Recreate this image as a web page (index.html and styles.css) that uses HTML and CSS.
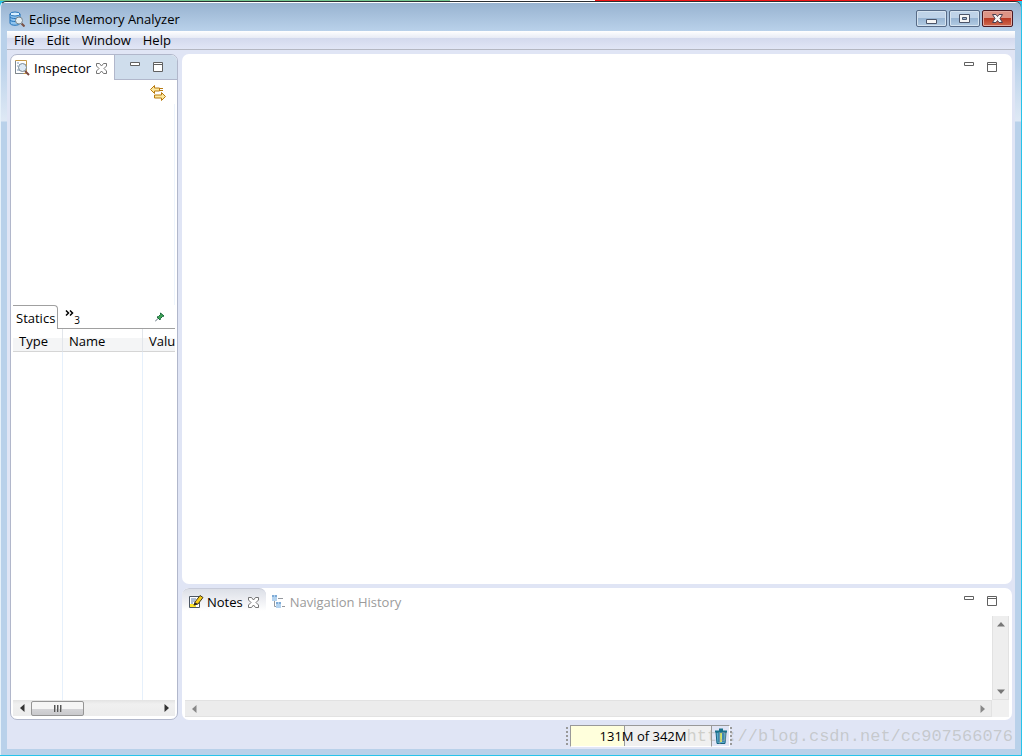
FILE: index.html
```html
<!DOCTYPE html>
<html lang="en">
<head>
<meta charset="utf-8">
<title>Eclipse Memory Analyzer</title>
<link rel="stylesheet" href="styles.css">
</head>
<body>
<svg class="defs" aria-hidden="true">
  <symbol id="minimize" viewBox="0 0 10 10"><path d="M.5.5h9v3h-9z" fill="#fff" stroke="#606060"/></symbol>
  <symbol id="maximize" viewBox="0 0 10 10"><path d="M.5.5h9v9h-9zM0 2.5h10" fill="#fff" stroke="#606060"/></symbol>
  <symbol id="close" viewBox="0 0 11 11"><path d="M.5.5h3l2 2.500 2-2.500h3v2.500l-2.500 2.500 2.500 2.500v2.500h-3l-2-2.500-2 2.500h-3v-2.500l2.500-2.500-2.500-2.500z" fill="#fff" stroke="#666" stroke-width=".9"/></symbol>
</svg>
<div class="window">
  <header class="titlebar">
    <svg class="icon" viewBox="0 0 16 16">
      <path d="M1 3v9c0 3 10 3 10 0V3z" fill="#8fc4ef" stroke="#2372b8"/>
      <ellipse cx="6" cy="3" rx="5" ry="2" fill="#d8efff" stroke="#2372b8"/>
      <path d="M1 6c1 2 9 2 10 0M1 9c1 2 9 2 10 0" fill="none" stroke="#2372b8"/>
      <path d="M12.500 12.500l3 3" stroke="#7b5145" stroke-width="2"/>
      <circle cx="10" cy="9.500" r="3.500" fill="#e4edf2" stroke="#78868d"/>
    </svg>
    <h1>Eclipse Memory Analyzer</h1>
    <div class="captions">
      <button class="caption" aria-label="Minimize window"><svg viewBox="0 0 29 15"><path d="M9.500 8.500h10v4h-10z" fill="#f5f5f5" stroke="#4b5468"/></svg></button>
      <button class="caption" aria-label="Restore window"><svg viewBox="0 0 29 15"><path d="M9.500 3.500h10v8h-10z" fill="#f5f5f5" stroke="#4b5468"/><path d="M12.500 6.500h4v2h-4z" fill="#9ab5d3" stroke="#4b5468"/></svg></button>
      <button class="caption caption-close" aria-label="Close window"><svg viewBox="0 0 29 15"><path d="M9.500 3.500h3.500l1.500 2 1.500-2h3.500l-2.500 4 2.500 4h-3.500l-1.500-2-1.500 2h-3.500l2.500-4z" fill="#f5f5f5" stroke="#4b3f50"/></svg></button>
    </div>
  </header>
  <div class="client">
    <nav class="menu">
      <button>File</button><button>Edit</button><button>Window</button><button>Help</button>
    </nav>
    <main class="workbench">
      <section class="panel inspector">
        <div class="tabs">
          <div class="tab">
            <svg class="icon" viewBox="0 0 16 16">
              <path d="M1.500 .5h11v13h-11z" fill="#fff" stroke="#c59a48"/><path d="M1.500 1v12.500h8" fill="none" stroke="#7d8790"/>
              <path d="M3 3h2m-2 3h1m-1 4h2" stroke="#7897bd"/>
              <path d="M11 11l4 4" stroke="#7b4940" stroke-width="2"/>
              <circle cx="8.500" cy="7.500" r="4" fill="#dce9f5" stroke="#778894"/>
            </svg>
            <span>Inspector</span>
            <button class="tool" aria-label="Close Inspector"><svg class="x"><use href="#close"/></svg></button>
          </div>
          <div class="controls">
            <button class="tool" aria-label="Minimize"><svg class="small"><use href="#minimize"/></svg></button>
            <button class="tool" aria-label="Maximize"><svg class="small"><use href="#maximize"/></svg></button>
          </div>
        </div>
        <div class="toolbar">
          <button class="tool" aria-label="Link with snapshot"><svg class="sync" viewBox="0 0 16 16"><path d="M.5 4.500l4-4v2.500h5v3h-5v2.500zM15.500 11.500l-4-4V10h-7v3h7v2.500z" fill="#fde9a0" stroke="#b87a10"/><path d="M10 3.500h3M10 5.500h3" stroke="#b87a10"/></svg></button>
        </div>
        <div class="details"></div>
        <div class="statics">
          <div class="subtabs">
            <button class="subtab">Statics</button>
            <button class="more" aria-label="Show 3 more tabs"><svg viewBox="0 0 9 7"><path d="M1 .5l2.500 2.500L1 5.500M5 .5l2.500 2.500L5 5.500" fill="none" stroke="#000" stroke-width="1.500"/></svg><small>3</small></button>
            <button class="tool pin" aria-label="Pin tab"><svg viewBox="0 0 10 10"><path d="M0 9.500l4-4" stroke="#5d6d78"/><path d="M5.500 1l3.500 3-1.500.5-2 2-.5 1.500L2 5l1.500-.5 2-2z" fill="#3fa455" stroke="#17683b"/></svg></button>
          </div>
          <table>
            <thead><tr><th>Type</th><th>Name</th><th>Value</th></tr></thead>
            <tbody><tr><td></td><td></td><td></td></tr></tbody>
          </table>
          <div class="hscroll">
            <button class="arrow" aria-label="Scroll left"><svg viewBox="0 0 5 8"><path d="M4.500 0v8L0 4z" fill="#333"/></svg></button>
            <div class="thumb"><i></i><i></i><i></i></div>
            <button class="arrow end" aria-label="Scroll right"><svg viewBox="0 0 5 8"><path d="M.5 0v8L5 4z" fill="#333"/></svg></button>
          </div>
        </div>
      </section>
      <div class="column">
        <section class="panel editor">
          <div class="controls">
            <button class="tool" aria-label="Minimize"><svg class="small"><use href="#minimize"/></svg></button>
            <button class="tool" aria-label="Maximize"><svg class="small"><use href="#maximize"/></svg></button>
          </div>
        </section>
        <section class="panel notes">
          <div class="tabs">
            <div class="tab">
              <svg class="icon" viewBox="0 0 16 16">
                <path d="M1.500 2.500h10v11h-10z" fill="#fff" stroke="#4b5662"/><path d="M3 5h5M3 7h4M3 9h2" stroke="#5e7ca8"/>
                <path d="M2 10h6v3H2z" fill="#ffe52a"/>
                <path d="M7 8l5-6.500 3 2-5 6.500-4 1z" fill="#f8cc16" stroke="#463c1e"/><path d="M5.500 11.500l2-3 2 1.500z" fill="#222"/>
              </svg>
              <span>Notes</span>
              <button class="tool" aria-label="Close Notes"><svg class="x"><use href="#close"/></svg></button>
            </div>
            <button class="tab-idle">
              <svg class="icon" viewBox="0 0 16 16">
                <path d="M3.500 6v6.500H6M7 4.500h5M11 12.500h3" fill="none" stroke="#94989e"/>
                <path d="M1 1h5v6H1zM5 8h5v6H5z" fill="#b4d3ef"/><path d="M1 1h2v2H1zM4 1h2v2H4zM5 8h2v2H5zM8 8h2v2H8z" fill="#7fabd6"/>
              </svg>
              <span>Navigation History</span>
            </button>
            <div class="controls">
              <button class="tool" aria-label="Minimize"><svg class="small"><use href="#minimize"/></svg></button>
              <button class="tool" aria-label="Maximize"><svg class="small"><use href="#maximize"/></svg></button>
            </div>
          </div>
          <div class="textpane">
            <textarea aria-label="Notes"></textarea>
            <div class="vscroll">
              <button class="arrow" aria-label="Scroll up"><svg class="wide" viewBox="0 0 8 5"><path d="M0 4.500h8L4 0z" fill="#777"/></svg></button>
              <button class="arrow" aria-label="Scroll down"><svg class="wide" viewBox="0 0 8 5"><path d="M0 .5h8L4 5z" fill="#777"/></svg></button>
            </div>
            <div class="hscroll idle">
              <button class="arrow" aria-label="Scroll left"><svg viewBox="0 0 5 8"><path d="M4.500 0v8L0 4z" fill="#888"/></svg></button>
              <button class="arrow end" aria-label="Scroll right"><svg viewBox="0 0 5 8"><path d="M.5 0v8L5 4z" fill="#888"/></svg></button>
            </div>
            <div class="corner"></div>
          </div>
        </section>
      </div>
    </main>
    <footer class="status">
      <span class="grip"></span>
      <div class="heap"><span>131M of 342M</span></div>
      <button class="trash" aria-label="Run garbage collector"><svg viewBox="0 0 14 16"><path d="M2 4h10l-1 11.500H3z" fill="#5aaccb" stroke="#17617f"/><path d="M5 5v9M9 5v9" stroke="#24619a"/><path d="M7 5v9" stroke="#d5e36a" stroke-width="2"/><path d="M1 3.500h12M5 1.500h4" stroke="#17718b" stroke-width="2"/></svg></button>
      <span class="grip"></span>
    </footer>
  </div>
  <div class="watermark">http://blog.csdn.net/cc907566076</div>
</div>
</body>
</html>
```
FILE: styles.css
```css
* { box-sizing: border-box; }
body {
  margin: 0;
  height: 100vh;
  padding: 1px 1px 1px 0;
  background: linear-gradient(90deg, #75c78f 0 44%, #fff 44% 58.2%, #f01414 58.2%) top / 100% 1px no-repeat, #27c3ea;
  font: 13px/18px "Open Sans", "Noto Sans", sans-serif;
  color: #000;
  overflow: hidden;
}
button { font: inherit; color: inherit; border: 0; padding: 0; background: none; }
svg { display: block; flex: none; }
.defs { position: absolute; width: 0; height: 0; }
.icon { width: 16px; height: 16px; }
.window {
  position: relative;
  height: 100%;
  display: flex;
  flex-direction: column;
  padding: 0 6px 6px;
  border-top: 1px solid #2b2f33;
  border-left: 1px solid #e6f1fa;
  border-radius: 6px 6px 0 0;
  background: linear-gradient(#fff 0 1px, #98b3d0 1px, #b9d1ea 29px, #b9d1ea 60px, #dfe9f5 119px, #b9d1ea 120px);
}
.titlebar { flex: none; height: 29px; display: flex; align-items: center; gap: 4px; padding: 4px 2px 0; }
.titlebar h1 { flex: 1; margin: 0; font-size: 13px; font-weight: 400; }
.captions { display: flex; gap: 2px; }
.caption {
  width: 31px;
  height: 17px;
  border: 1px solid #576b87;
  border-radius: 2px;
  box-shadow: inset 0 0 0 1px #d5e3f0;
  background: linear-gradient(#bfd3e8 50%, #98b5d3 50%, #b3cce3);
}
.caption svg { width: 29px; height: 15px; }
.caption-close { border-color: #4b1922; box-shadow: inset 0 0 0 1px #e3a99f; background: linear-gradient(#dd9486 50%, #b93a24 50%, #cf6a4e); }
.client { flex: 1; min-height: 0; display: flex; flex-direction: column; background: #e0e5f5; }
.menu {
  flex: none;
  height: 19px;
  display: flex;
  gap: 12px;
  padding: 0 7px;
  border-bottom: 1px solid #b4b7c2;
  background: linear-gradient(#fff, #e7ebf5 7px, #d3d9ed 7px, #e1e6f6);
}
.workbench { flex: 1; min-height: 0; display: flex; gap: 4px; padding: 4px 3px 0; }
.panel { background: #fff; border-radius: 7px; overflow: hidden; display: flex; flex-direction: column; }
.inspector { width: 168px; flex: none; border: 1px solid #b1b7cb; }
.tabs { display: flex; flex: none; }
.tab { display: flex; align-items: center; gap: 4px; }
.tool { display: block; }
.x { width: 11px; height: 11px; margin-left: 1px; }
.small { width: 10px; height: 10px; }
.controls { display: flex; gap: 13px; margin-left: auto; padding: 8px 15px 0 0; align-items: flex-start; }
.inspector .tabs { height: 25px; }
.inspector .tab { padding: 1px 0 0 3px; flex: none; }
.inspector .controls { flex: 1; justify-content: flex-end; margin-left: 7px; padding: 7px 14px 0 0; border-left: 1px solid #b1b7cb; border-bottom: 1px solid #b1b7cb; background: #cfddec; }
.toolbar { display: flex; justify-content: flex-end; padding: 5px 11px 3px; }
.sync { width: 16px; height: 16px; }
.details { flex: 202 1 0; margin-right: 2px; border-right: 1px solid #edf4fc; }
.statics { flex: 413 1 0; display: flex; flex-direction: column; padding: 0 2px 3px; min-height: 0; }
.subtabs { flex: none; display: flex; height: 24px; border-bottom: 1px solid #a0a0a0; }
.subtab { height: 24px; padding: 0 2px 0 3px; border: solid #a0a0a0; border-width: 1px 1px 0 0; border-radius: 0 4px 0 0; background: #fff; flex: none; }
.more { display: flex; padding: 5px 0 0 7px; align-items: flex-start; }
.more svg { width: 9px; height: 7px; }
.more small { font-size: 10px; line-height: 20px; }
.pin { margin: 0 10px 0 auto; }
.pin svg { width: 10px; height: 10px; }
table { flex: 1; display: grid; grid-template-rows: 23px 1fr; overflow: hidden; }
thead, tbody { display: grid; }
tr { display: grid; grid-template-columns: 50px 80px 60px; }
th { font-weight: 400; text-align: left; padding: 3px 6px 0; border-right: 1px solid #e2e6eb; border-bottom: 1px solid #d5d5d5; background: linear-gradient(#fff 40%, #f4f5f6 40%); }
td { padding: 0; border-right: 1px solid #e6f0fb; }
.hscroll { flex: none; height: 16px; display: flex; align-items: center; background: linear-gradient(#e3e3e3, #f0f0f0 4px, #ececec); }
.arrow { flex: none; width: 18px; height: 16px; display: flex; align-items: center; justify-content: center; }
.arrow svg { width: 5px; height: 8px; }
.arrow .wide { width: 8px; height: 5px; }
.end { margin-left: auto; }
.thumb { width: 53px; height: 15px; display: flex; justify-content: center; align-items: center; gap: 1px; border: 1px solid #959595; border-radius: 2px; background: linear-gradient(#f5f5f5 50%, #d5d5d8 50%, #c9c9cc); }
.thumb i { width: 2px; height: 7px; background: linear-gradient(90deg, #555 50%, #aaa 50%); }
.column { flex: 1; min-width: 0; display: flex; flex-direction: column; gap: 4px; }
.editor { flex: 1; }
.notes { flex: none; height: 132px; padding: 0 3px 3px; }
.notes .tabs { height: 28px; margin-left: -3px; align-items: flex-start; }
.notes .tab { height: 25px; padding: 2px 7px 0 6px; gap: 3px; border-top: 1px solid #c8ccda; border-radius: 7px 7px 0 0; background: linear-gradient(#dcdfe7, #fff 22px); }
.notes .x { margin-left: 2px; }
.tab-idle { display: flex; align-items: center; gap: 3px; height: 25px; padding: 3px 0 0 5px; color: #9b9b9b; }
.notes .controls { padding-right: 12px; }
.textpane { flex: 1; display: grid; grid-template: 1fr 17px / 1fr 17px; }
textarea { width: 100%; height: 100%; resize: none; border: 0; outline: 0; font: inherit; }
.vscroll { display: flex; flex-direction: column; justify-content: space-between; background: #eee; border: 1px solid #e2e2e2; border-top: 0; }
.vscroll .arrow { width: 15px; }
.idle { height: 17px; background: #ececec; border: 1px solid #e2e2e2; border-left: 0; }
.corner { background: #f0f0f0; }
.status { flex: none; height: 29px; display: flex; align-items: center; justify-content: flex-end; padding: 2px 281px 0 0; }
.grip { width: 4px; height: 18px; background: radial-gradient(circle at 1px 1px, #999 1px, transparent 1px) 0 0 / 4px 4px repeat-y; }
.heap { width: 142px; height: 22px; padding: 1px 0 0 4px; text-align: center; border: 1px solid #999; border-bottom-color: #fff; background: linear-gradient(90deg, #ffffdc 53px, #999 53px 54px, #f0f0f0 54px); }
.trash { width: 18px; height: 22px; display: flex; align-items: center; justify-content: center; border: 1px solid #fff; border-top-color: #999; border-left: 0; }
.trash svg { width: 14px; height: 16px; }
.watermark { position: absolute; right: 8px; bottom: 8px; font: 17px/20px "Liberation Mono", monospace; color: rgba(165, 165, 155, .45); white-space: nowrap; pointer-events: none; }
```
